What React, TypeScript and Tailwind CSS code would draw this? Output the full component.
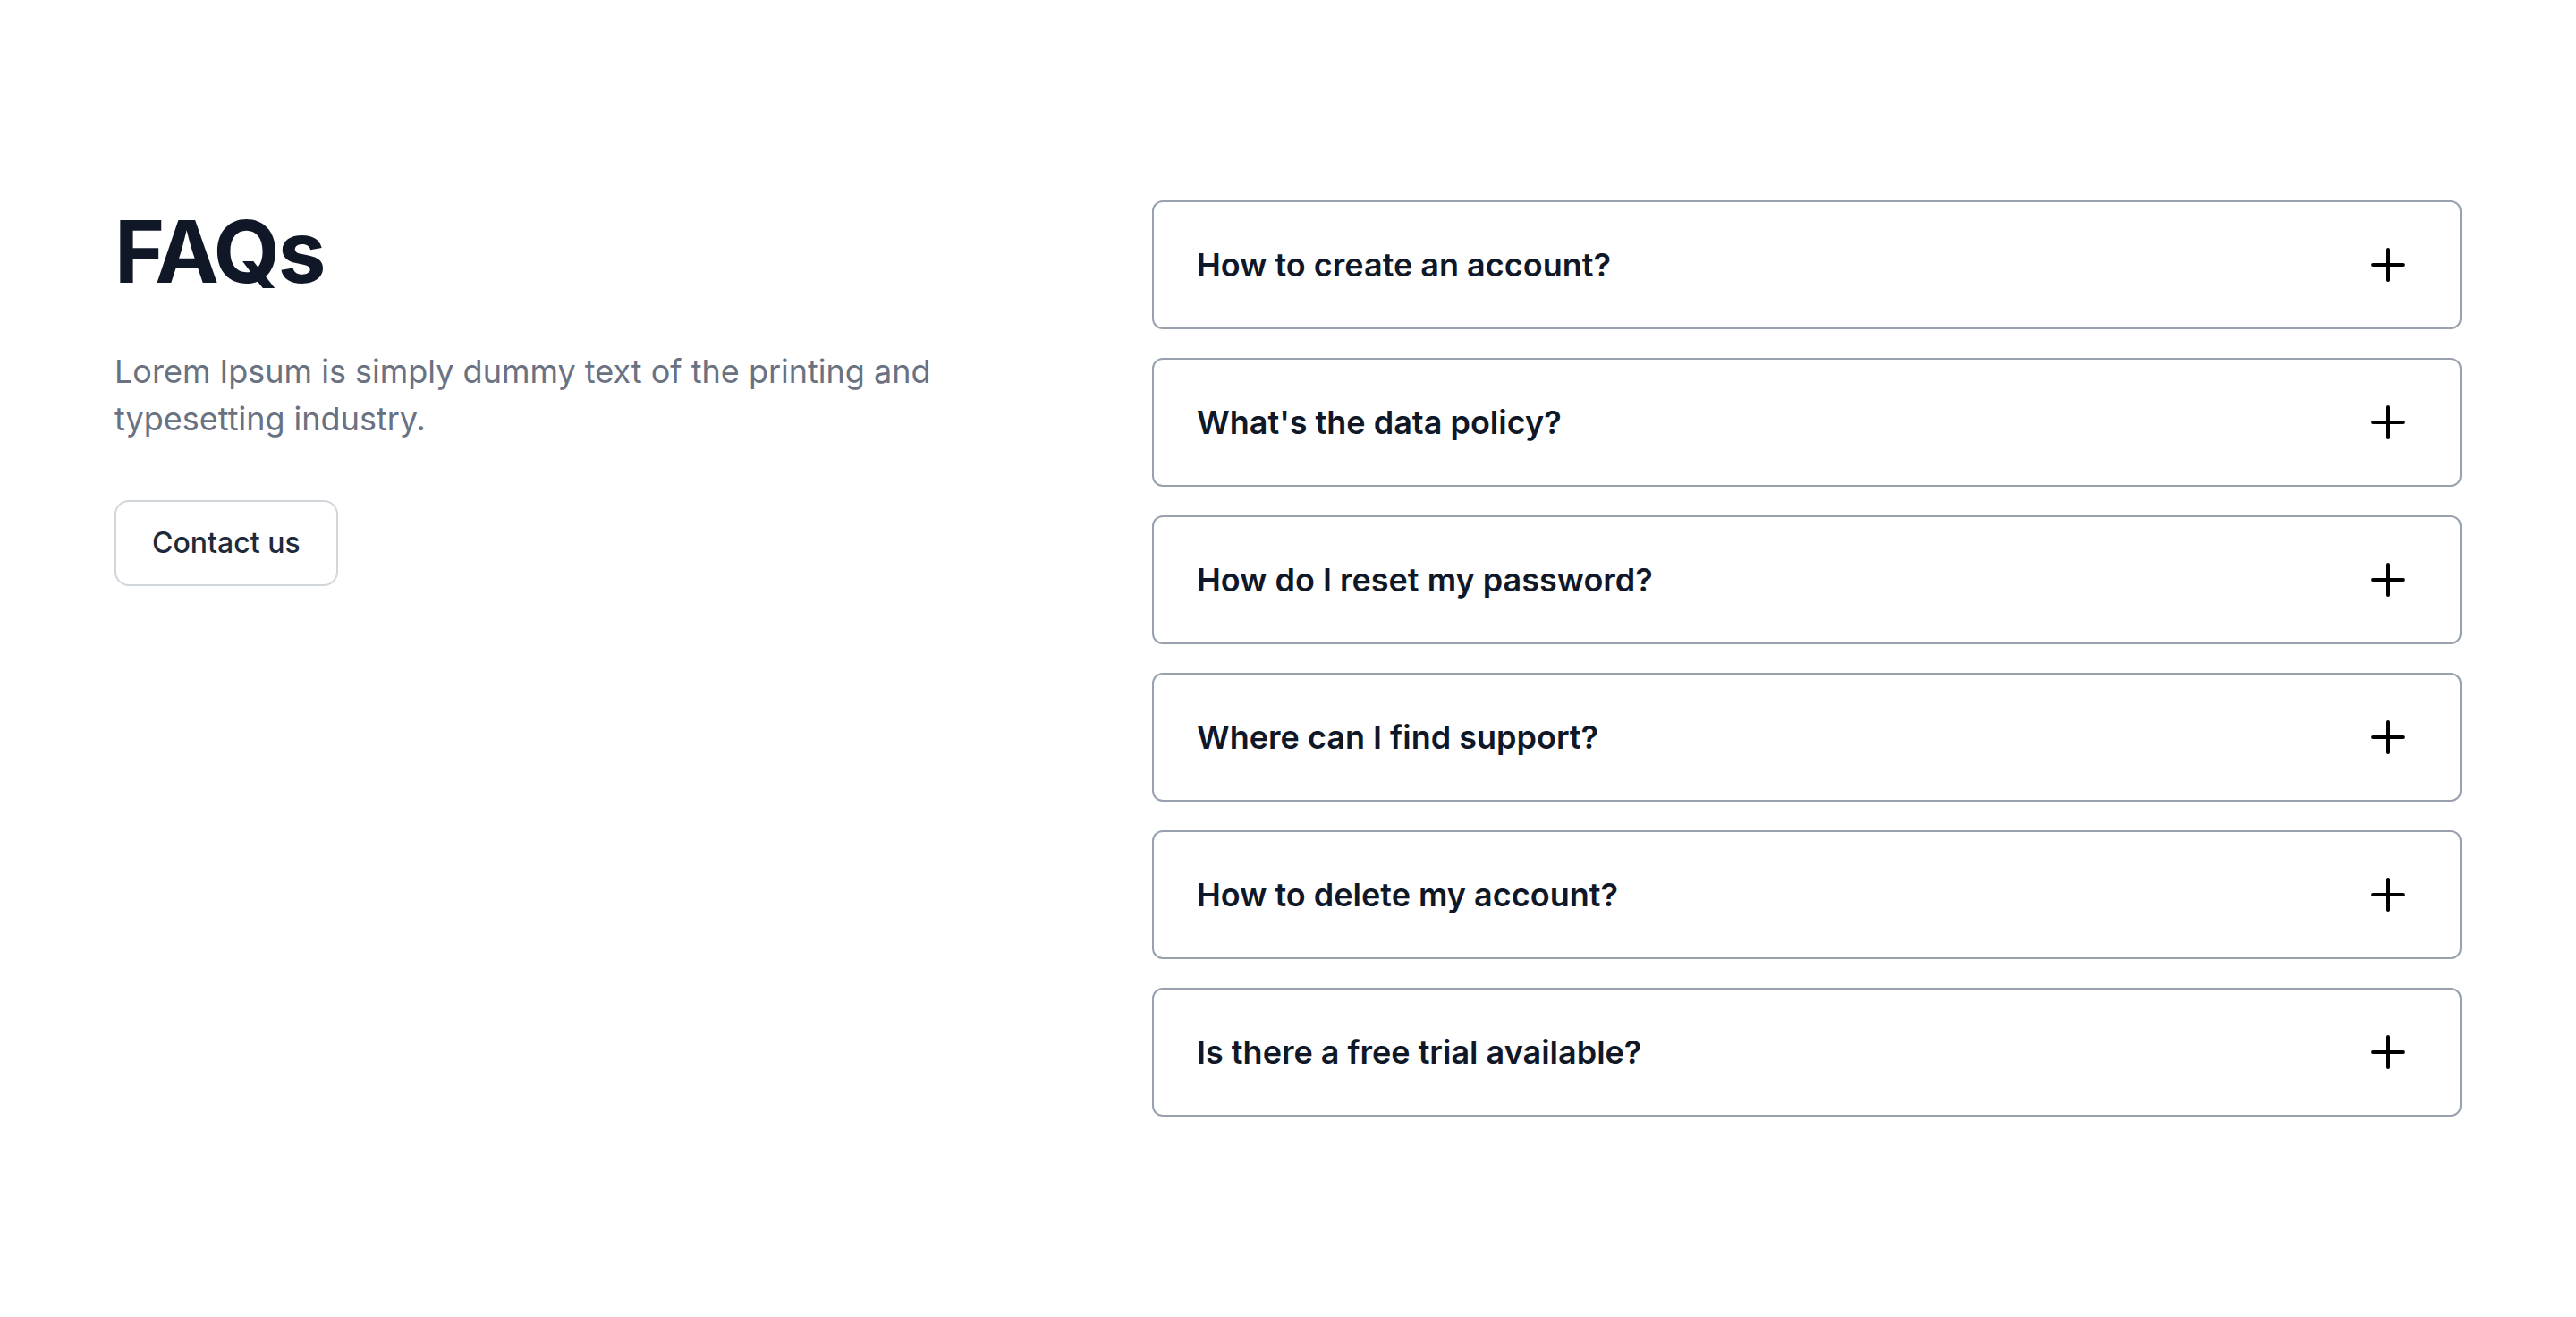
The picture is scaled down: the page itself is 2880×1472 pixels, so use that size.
import { Plus } from 'lucide-react';

const faqs = [
  'How to create an account?',
  "What's the data policy?",
  'How do I reset my password?',
  'Where can I find support?',
  'How to delete my account?',
  'Is there a free trial available?',
];

export default function App() {
  return (
    <main className="min-h-screen bg-white font-['Inter',sans-serif]">
      <section className="px-32 py-56">
        <div className="grid grid-cols-[1fr_1464px] gap-32">
          {/* Columna izquierda */}
          <div>
            <h2 className="text-[96px] leading-[1.2] font-bold tracking-tight text-gray-900">FAQs</h2>
            <p className="mt-[50px] max-w-[1024px] text-[36px] leading-[53px] text-gray-500">
              Lorem Ipsum is simply dummy text of the printing and typesetting industry.
            </p>
            <button className="mt-16 rounded-2xl border-2 border-gray-300 bg-white px-10 py-[22px] text-[32px] leading-[48px] font-medium text-gray-800">
              Contact us
            </button>
          </div>

          {/* Preguntas */}
          <div className="space-y-8">
            {faqs.map((q) => (
              <div
                key={q}
                className="flex h-[144px] items-center justify-between rounded-xl border-2 border-gray-400 bg-white px-12"
              >
                <span className="text-[36px] leading-[56px] font-semibold text-gray-900">{q}</span>
                <span className="flex size-16 items-center justify-center text-black">
                  <Plus size={58} strokeWidth={1.65} />
                </span>
              </div>
            ))}
          </div>
        </div>
      </section>
    </main>
  );
}
